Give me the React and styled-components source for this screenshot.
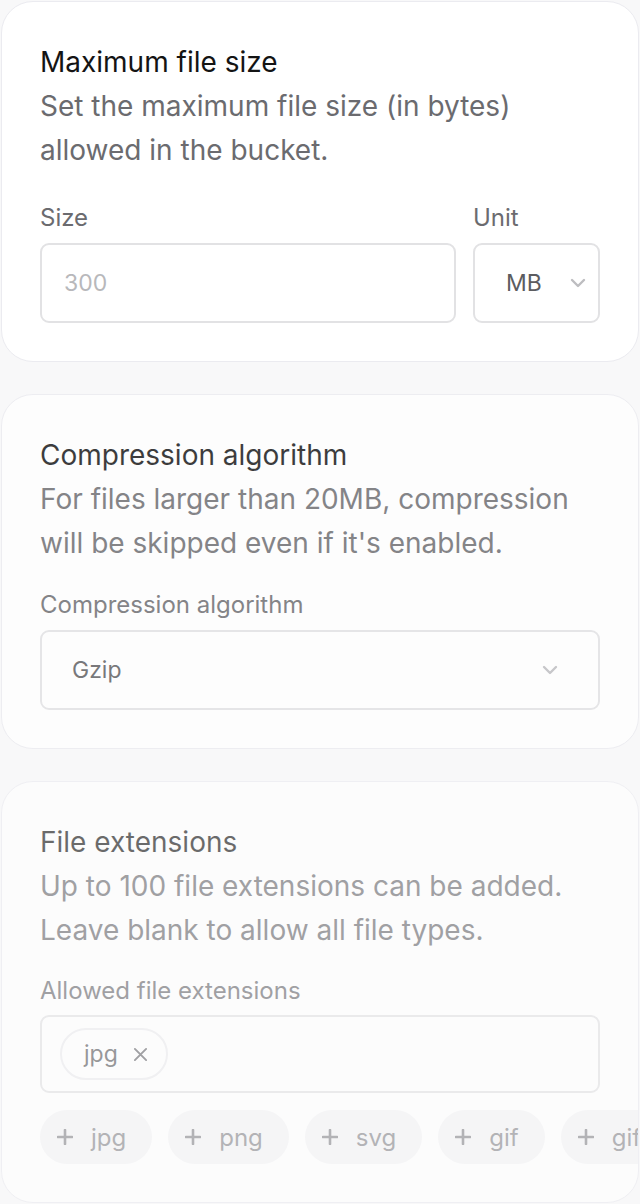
import styled, { createGlobalStyle } from "styled-components";

const GlobalStyle = createGlobalStyle`
  html, body {
    margin: 0;
    padding: 0;
    background: #f8f8f9;
    font-family: Inter, "Noto Sans", sans-serif;
    -webkit-font-smoothing: antialiased;
  }
`;

const Page = styled.div`
  display: flex;
  flex-direction: column;
  gap: 32px;
  padding: 1px 1px 0 1px;
  height: 1204px;
  box-sizing: border-box;
  overflow: hidden;
`;

const Card = styled.section`
  background: #fff;
  border: 1px solid #ebebf0;
  border-radius: 32px;
  padding: 38px;
  opacity: ${(p) => p.$fade};
  overflow: hidden;
  flex-shrink: 0;
`;

const Title = styled.h2`
  margin: 0;
  font-size: 28px;
  font-weight: 400;
  line-height: 44px;
  color: #141414;
`;

const Description = styled.p`
  margin: 0;
  font-size: 28px;
  line-height: 44px;
  color: #6b6b6f;
`;

const FieldRow = styled.div`
  display: flex;
  gap: 17px;
  margin-top: ${(p) => p.$top}px;
`;

const Field = styled.div`
  display: flex;
  flex-direction: column;
  gap: ${(p) => p.$gap || 10}px;
  flex: ${(p) => (p.$grow ? 1 : "0 0 auto")};
  width: ${(p) => (p.$width ? `${p.$width}px` : "auto")};
`;

const Label = styled.label`
  font-size: 24px;
  line-height: 30px;
  color: #6b6b6f;
`;

const InputBox = styled.div`
  height: 80px;
  box-sizing: border-box;
  border: 2px solid #e2e2e4;
  border-radius: 9px;
  background: #fff;
  display: flex;
  align-items: center;
  padding: 0 ${(p) => p.$padRight || 22}px 0 ${(p) => p.$padLeft || 22}px;
  font-size: 23px;
  color: ${(p) => (p.$placeholder ? "#b8b8bb" : "#5c5c60")};
`;

const SelectValue = styled.span`
  flex: 1;
`;

const Chevron = () => (
  <svg width="16" height="10" viewBox="0 0 16 10" fill="none">
    <path d="M2 2l6 6 6-6" stroke="#bdbdc0" strokeWidth="2.4" strokeLinecap="round" strokeLinejoin="round" />
  </svg>
);

const TagBox = styled.div`
  height: 78px;
  box-sizing: border-box;
  border: 2px solid #e2e2e4;
  border-radius: 9px;
  display: flex;
  align-items: center;
  padding: 0 18px;
  gap: 10px;
`;

const Tag = styled.span`
  display: inline-flex;
  align-items: center;
  gap: 15px;
  height: 52px;
  box-sizing: border-box;
  padding: 0 18px 0 22px;
  border: 2px solid #ececee;
  border-radius: 26px;
  font-size: 23px;
  color: #5c5c60;
`;

const Suggestions = styled.div`
  display: flex;
  gap: 16px;
  margin-top: 17px;
  margin-right: -80px;
`;

const Suggestion = styled.button`
  flex-shrink: 0;
  display: inline-flex;
  align-items: center;
  gap: 18px;
  height: 54px;
  padding: 0 26px 0 17px;
  border: none;
  border-radius: 27px;
  background: #f4f4f5;
  font-family: inherit;
  font-size: 24px;
  color: #8a8a8e;
`;

const Plus = () => (
  <svg width="16" height="16" viewBox="0 0 16 16">
    <path d="M8 1v14M1 8h14" stroke="#8a8a8e" strokeWidth="2.6" strokeLinecap="round" />
  </svg>
);

const Close = () => (
  <svg width="15" height="15" viewBox="0 0 16 16">
    <path d="M2 2l12 12M14 2L2 14" stroke="#6b6b6f" strokeWidth="2" strokeLinecap="round" />
  </svg>
);

export default function App() {
  const suggestions = ["jpg", "png", "svg", "gif", "gif"];
  return (
    <>
      <GlobalStyle />
      <Page>
        <Card $fade={1}>
          <Title>Maximum file size</Title>
          <Description>
            Set the maximum file size (in bytes)
            <br />
            allowed in the bucket.
          </Description>
          <FieldRow $top={31}>
            <Field $grow>
              <Label>Size</Label>
              <InputBox $placeholder $padLeft={22}>300</InputBox>
            </Field>
            <Field $width={127}>
              <Label>Unit</Label>
              <InputBox $padLeft={31} $padRight={12}>
                <SelectValue>MB</SelectValue>
                <Chevron />
              </InputBox>
            </Field>
          </FieldRow>
        </Card>

        <Card $fade={0.82}>
          <Title>Compression algorithm</Title>
          <Description>
            For files larger than 20MB, compression
            <br />
            will be skipped even if it's enabled.
          </Description>
          <FieldRow $top={25}>
            <Field $grow>
              <Label>Compression algorithm</Label>
              <InputBox $padLeft={30} $padRight={40}>
                <SelectValue>Gzip</SelectValue>
                <Chevron />
              </InputBox>
            </Field>
          </FieldRow>
        </Card>

        <Card $fade={0.62}>
          <Title>File extensions</Title>
          <Description>
            Up to 100 file extensions can be added.
            <br />
            Leave blank to allow all file types.
          </Description>
          <FieldRow $top={24}>
            <Field $grow $gap={9}>
              <Label>Allowed file extensions</Label>
              <TagBox>
                <Tag>
                  jpg
                  <Close />
                </Tag>
              </TagBox>
            </Field>
          </FieldRow>
          <Suggestions>
            {suggestions.map((s, i) => (
              <Suggestion key={i}>
                <Plus />
                {s}
              </Suggestion>
            ))}
          </Suggestions>
        </Card>
      </Page>
    </>
  );
}
